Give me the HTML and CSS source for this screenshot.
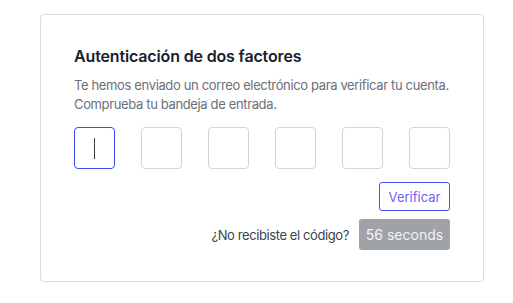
FILE: index.html
```html
<!DOCTYPE html>
<html lang="es">
<head>
<meta charset="utf-8">
<link rel="stylesheet" href="styles.css">
</head>
<body>
<div class="card">
  <h2 class="title">Autenticación de dos factores</h2>
  <p class="desc">Te hemos enviado un correo electrónico para verificar tu cuenta.<br>Comprueba tu bandeja de entrada.</p>
  <div class="codes">
    <div class="code focus"><span class="caret"></span></div>
    <div class="code"></div>
    <div class="code"></div>
    <div class="code"></div>
    <div class="code"></div>
    <div class="code"></div>
  </div>
  <div class="actions">
    <button class="verify">Verificar</button>
  </div>
  <div class="resend">
    <span class="resend-text">¿No recibiste el código?</span>
    <button class="timer">56 seconds</button>
  </div>
</div>
</body>
</html>
```
FILE: styles.css
```css
html, body {
  margin: 0;
  padding: 0;
  background: #ffffff;
}
body {
  font-family: Inter, "Noto Sans", "Liberation Sans", sans-serif;
  padding: 14px 0 0 40px;
}
.card {
  box-sizing: border-box;
  width: 444px;
  height: 268px;
  border: 1px solid #dcdde0;
  border-radius: 4px;
  padding: 31px 33px 31px 33px;
  display: flex;
  flex-direction: column;
}
.title {
  margin: 0;
  font-size: 16px;
  line-height: 20px;
  font-weight: 600;
  color: #17202e;
  letter-spacing: -0.15px;
}
.desc {
  margin: 10px 0 0;
  font-size: 13px;
  line-height: 19px;
  color: #6b7078;
  white-space: nowrap;
  letter-spacing: -0.36px;
}
.codes {
  margin-top: 13px;
  display: flex;
  justify-content: space-between;
}
.code {
  box-sizing: border-box;
  width: 41px;
  height: 42px;
  border: 1px solid #d3d5da;
  border-radius: 4px;
  display: flex;
  align-items: center;
  justify-content: center;
}
.code.focus {
  border-color: #3b4cf2;
}
.caret {
  width: 1px;
  height: 21px;
  background: #3a3a3a;
}
.actions {
  margin-top: 13px;
  display: flex;
  justify-content: flex-end;
}
.verify {
  box-sizing: border-box;
  height: 29px;
  width: 71px;
  padding: 0;
  border: 1px solid #4a50ef;
  border-radius: 3px;
  background: #ffffff;
  color: #6f62f2;
  font-family: inherit;
  font-size: 13px;
}
.resend {
  margin-top: 8px;
  display: flex;
  justify-content: flex-end;
  align-items: center;
  gap: 10px;
}
.resend-text {
  font-size: 13px;
  color: #3a4350;
  letter-spacing: -0.4px;
}
.timer {
  box-sizing: border-box;
  height: 31px;
  width: 91px;
  padding: 0;
  border: none;
  border-radius: 3px;
  background: #9fa2a7;
  color: #f4f4f6;
  font-family: inherit;
  font-size: 14px;
}
```
